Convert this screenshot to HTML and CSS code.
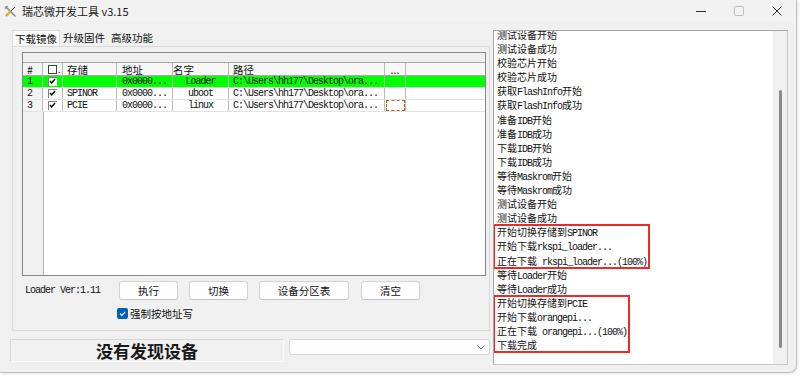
FILE: index.html
```html
<!DOCTYPE html>
<html>
<head>
<meta charset="utf-8">
<link rel="stylesheet" href="styles.css">
</head>
<body>
<div class="window">
  <div class="titlebar">
    <svg class="appicon" width="13" height="13" viewBox="0 0 13 13">
      <path d="M2 2 L11 11" stroke="#8c8c8c" stroke-width="1.6" stroke-linecap="round"/>
      <path d="M1 3.5 L3.5 1" stroke="#8c8c8c" stroke-width="1.4"/>
      <path d="M11 2 L6.5 6.5" stroke="#444" stroke-width="1"/>
      <path d="M6.5 6.5 L2.5 10.5" stroke="#e3a81c" stroke-width="2.4" stroke-linecap="round"/>
    </svg>
    <span class="title">瑞芯微开发工具 v3.15</span>
    <div class="caps">
      <span class="cap"><svg width="10" height="10" viewBox="0 0 10 10"><path d="M0 5.5 H10" stroke="#333" stroke-width="1"/></svg></span>
      <span class="cap"><svg width="10" height="10" viewBox="0 0 10 10"><rect x="0.5" y="0.5" width="9" height="9" rx="1" fill="none" stroke="#bdbdbd" stroke-width="1"/></svg></span>
      <span class="cap"><svg width="10" height="10" viewBox="0 0 10 10"><path d="M0.5 0.5 L9.5 9.5 M9.5 0.5 L0.5 9.5" stroke="#333" stroke-width="1"/></svg></span>
    </div>
  </div>
  <div class="content">
    <div class="left">
      <div class="tabs">
        <span class="tab active">下载镜像</span>
        <span class="tab">升级固件</span>
        <span class="tab">高级功能</span>
      </div>
      <div class="panel">
        <div class="grid">
          <div class="band"></div>
          <div class="row head">
            <span class="c c0">#</span>
            <span class="c c1"><span class="hbox"></span><span class="hdot">.</span></span>
            <span class="c c2">存储</span>
            <span class="c c3">地址</span>
            <span class="c c4">名字</span>
            <span class="c c5">路径</span>
            <span class="c c6 dots">...</span>
          </div>
          <div class="row sel">
            <span class="c c0 m">1</span>
            <span class="c c1"><span class="chk white"><svg width="9" height="9" viewBox="0 0 9 9"><path d="M2 4 L3.7 6 L7 2" fill="none" stroke="#000" stroke-width="1.4"/></svg></span></span>
            <span class="c c2 m"></span>
            <span class="c c3 m">0x0000...</span>
            <span class="c c4 m ctr">Loader</span>
            <span class="c c5 m">C:\Users\hh177\Desktop\ora...</span>
            <span class="c c6"></span>
          </div>
          <div class="row">
            <span class="c c0 m">2</span>
            <span class="c c1"><span class="chk"><svg width="9" height="9" viewBox="0 0 9 9"><path d="M2 4 L3.7 6 L7 2" fill="none" stroke="#000" stroke-width="1.4"/></svg></span></span>
            <span class="c c2 m">SPINOR</span>
            <span class="c c3 m">0x0000...</span>
            <span class="c c4 m ctr">uboot</span>
            <span class="c c5 m">C:\Users\hh177\Desktop\ora...</span>
            <span class="c c6"></span>
          </div>
          <div class="row">
            <span class="c c0 m">3</span>
            <span class="c c1"><span class="chk"><svg width="9" height="9" viewBox="0 0 9 9"><path d="M2 4 L3.7 6 L7 2" fill="none" stroke="#000" stroke-width="1.4"/></svg></span></span>
            <span class="c c2 m">PCIE</span>
            <span class="c c3 m">0x0000...</span>
            <span class="c c4 m ctr">linux</span>
            <span class="c c5 m">C:\Users\hh177\Desktop\ora...</span>
            <span class="c c6"><span class="focus"></span></span>
          </div>
          <div class="gfill"></div>
        </div>
        <div class="controls">
          <span class="ver m">Loader Ver:1.11</span>
          <button class="btn b1">执行</button>
          <button class="btn b2">切换</button>
          <button class="btn b3">设备分区表</button>
          <button class="btn b4">清空</button>
        </div>
        <div class="force">
          <span class="cbox"><svg width="11" height="11" viewBox="0 0 11 11"><path d="M3 5.6 L4.8 7.4 L8.2 3.8" fill="none" stroke="#fff" stroke-width="1.1"/></svg></span>
          <span class="flabel">强制按地址写</span>
        </div>
      </div>
      <div class="statusrow">
        <div class="status">没有发现设备</div>
        <div class="combo"><svg width="8" height="5" viewBox="0 0 8 5"><path d="M0.5 0.5 L4 4 L7.5 0.5" fill="none" stroke="#8a8a8a" stroke-width="1"/></svg></div>
      </div>
    </div>
    <div class="log">
      <div class="lines">
        <div class="l">测试设备开始</div>
        <div class="l">测试设备成功</div>
        <div class="l">校验芯片开始</div>
        <div class="l">校验芯片成功</div>
        <div class="l">获取<span class="m">FlashInfo</span>开始</div>
        <div class="l">获取<span class="m">FlashInfo</span>成功</div>
        <div class="l">准备<span class="m">IDB</span>开始</div>
        <div class="l">准备<span class="m">IDB</span>成功</div>
        <div class="l">下载<span class="m">IDB</span>开始</div>
        <div class="l">下载<span class="m">IDB</span>成功</div>
        <div class="l">等待<span class="m">Maskrom</span>开始</div>
        <div class="l">等待<span class="m">Maskrom</span>成功</div>
        <div class="l">测试设备开始</div>
        <div class="l">测试设备成功</div>
        <div class="box">
          <div class="l">开始切换存储到<span class="m">SPINOR</span></div>
          <div class="l">开始下载<span class="m">rkspi_loader...</span></div>
          <div class="l">正在下载<span class="m"> rkspi_loader...(100%)</span></div>
        </div>
        <div class="l">等待<span class="m">Loader</span>开始</div>
        <div class="l">等待<span class="m">Loader</span>成功</div>
        <div class="box">
          <div class="l">开始切换存储到<span class="m">PCIE</span></div>
          <div class="l">开始下载<span class="m">orangepi...</span></div>
          <div class="l">正在下载<span class="m"> orangepi...(100%)</span></div>
          <div class="l">下载完成</div>
        </div>
      </div>
      <div class="scroll"><div class="thumb"></div></div>
    </div>
  </div>
</div>
</body>
</html>
```

FILE: styles.css
```css
* { box-sizing: border-box; }
html, body { margin: 0; background: #ffffff; }
body {
  width: 800px;
  height: 376px;
  overflow: hidden;
  font-family: "Noto Sans CJK SC", sans-serif;
  color: #111;
}
.m {
  font-family: "Liberation Mono", "Noto Sans CJK SC", monospace;
  font-size: 10px;
  letter-spacing: -1px;
}
.window {
  width: 797px;
  height: 373px;
  background: #f0f0f0;
  border-right: 1px solid #c4c4c4;
  border-bottom: 1px solid #c4c4c4;
  border-radius: 0 0 8px 0;
  box-shadow: 1px 1px 3px rgba(0,0,0,0.12);
  display: flex;
  flex-direction: column;
}
.titlebar {
  height: 22px;
  display: flex;
  align-items: center;
  background: #f2f2f2;
}
.appicon { margin-left: 4px; }
.title { margin-left: 5px; font-size: 11px; color: #1a1a1a; }
.caps { margin-left: auto; display: flex; height: 22px; }
.cap { width: 38px; display: flex; align-items: center; justify-content: center; }

.content { display: flex; padding-top: 8px; }
.left { width: 493px; display: flex; flex-direction: column; }

.tabs { display: flex; height: 16px; margin-left: 12px; }
.tab {
  padding: 0 3px;
  font-size: 10.5px;
  line-height: 16px;
  color: #111;
}
.tab.active {
  background: #fafafa;
  border: 1px solid #dcdcdc;
  border-bottom: none;
  line-height: 15px;
  padding: 0 2px;
}

.panel {
  margin-left: 12px;
  width: 478px;
  height: 285px;
  border: 1px solid #dadada;
  background: #f0f0f0;
  display: flex;
  flex-direction: column;
}
.grid {
  margin: 5px 0 0 9px;
  width: 464px;
  height: 224px;
  border: 1px solid #828790;
  background: #ffffff;
  display: flex;
  flex-direction: column;
}
.band {
  height: 10px;
  background: #f0f0f0;
  border-bottom: 1px solid #a9a9a9;
}
.row { display: flex; height: 12px; border-bottom: 1px solid #e2e2e2; }
.row.head { height: 13px; background: #f7f7f7; border-bottom: 1px solid #a9a9a9; }
.c {
  height: 100%;
  border-right: 1px solid #b8b8b8;
  display: flex;
  align-items: center;
  overflow: hidden;
  white-space: nowrap;
  font-size: 10px;
}
.head .c { font-size: 10.5px; }
.c0 { width: 20px; padding-left: 4px; background: #f4f4f4; }
.c1 { width: 20px; padding-left: 5px; }
.c2 { width: 54px; padding-left: 4px; }
.c3 { width: 56px; padding-left: 5px; }
.c4 { width: 56px; }
.c5 { width: 156px; padding-left: 4px; }
.c6 { width: 21px; }
.ctr { justify-content: center; }
.dots { justify-content: center; font-size: 10px; letter-spacing: 0; }
.sel, .sel .c, .sel .c0 { background: #00ff00; }
.hbox { width: 9px; height: 9px; border: 1px solid #444; background: #fff; }
.hdot { font-size: 9px; margin-left: 1px; }
.chk {
  width: 9px;
  height: 9px;
  display: flex;
  border-left: 1px solid #808080;
  border-top: 1px solid #808080;
}
.chk.white { background: #fff; }
.chk svg { margin: -1px 0 0 -1px; }
.focus {
  width: 19px;
  height: 11px;
  border: 1px dashed #b8622a;
  margin-left: 1px;
}
.gfill {
  flex: 1;
  background: linear-gradient(to right, #f0f0f0 20px, #b8b8b8 20px, #b8b8b8 21px, #fff 21px);
}

.controls {
  display: flex;
  align-items: center;
  margin-top: 5px;
  padding-left: 12px;
  height: 19px;
}
.ver { width: 94px; }
.btn {
  height: 19px;
  padding: 0;
  background: #fdfdfd;
  border: 1px solid #d3d3d3;
  border-bottom-color: #c4c4c4;
  border-radius: 3px;
  font-family: "Noto Sans CJK SC", sans-serif;
  font-size: 10.5px;
  color: #111;
}
.b1 { width: 59px; }
.b2 { width: 59px; margin-left: 11px; }
.b3 { width: 90px; margin-left: 11px; }
.b4 { width: 59px; margin-left: 12px; }

.force {
  display: flex;
  align-items: center;
  margin: 7px 0 0 104px;
  height: 12px;
}
.cbox {
  width: 11px;
  height: 11px;
  background: #005fb8;
  border-radius: 2px;
  display: flex;
}
.flabel { margin-left: 2px; font-size: 10.5px; }

.statusrow { display: flex; margin-top: 8px; align-items: flex-start; }
.status {
  margin-left: 10px;
  width: 274px;
  height: 23px;
  border: 1px solid #d8d8d8;
  border-right-color: #fafafa;
  border-bottom-color: #fafafa;
  display: flex;
  align-items: center;
  justify-content: center;
  font-size: 17px;
  font-weight: 700;
  color: #1a1a1a;
  letter-spacing: 0;
}
.combo {
  margin-left: 5px;
  width: 201px;
  height: 16px;
  background: #fdfdfd;
  border: 1px solid #d6d6d6;
  border-radius: 3px;
  display: flex;
  align-items: center;
  justify-content: flex-end;
  padding-right: 4px;
}

.log {
  width: 295px;
  height: 335px;
  border: 1px solid #a6a6a6;
  border-right-color: #c8c8c8;
  border-bottom-color: #c8c8c8;
  background: #fff;
  display: flex;
  overflow: hidden;
}
.lines {
  width: 279px;
  margin-top: -3px;
  font-size: 10px;
}
.l {
  height: 14.1px;
  line-height: 14.1px;
  padding-left: 3px;
  white-space: nowrap;
}
.l .m { line-height: 14.1px; }
.box {
  width: fit-content;
  padding-right: 2px;
  outline: 2px solid #ec2a2a;
  outline-offset: -1px;
}
.scroll {
  width: 14px;
  background: #f0f0f0;
  padding-top: 59px;
  display: flex;
  justify-content: center;
}
.thumb {
  width: 3px;
  height: 258px;
  background: #8a8a8a;
  border-radius: 2px;
}
```
